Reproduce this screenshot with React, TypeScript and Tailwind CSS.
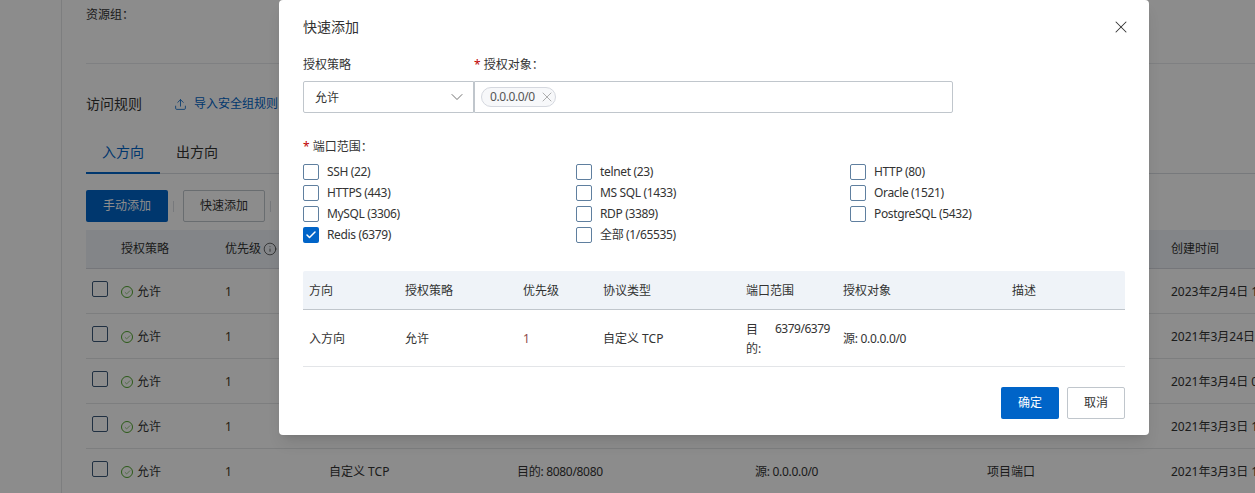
import { Check, ChevronDown, Info, Upload, X } from 'lucide-react';

const FONT = "font-['Noto_Sans','Noto_Sans_CJK_SC',sans-serif]";

const bgRows = [
  { port: '', target: '', desc: '', date: '2023年2月4日 16:20:11' },
  { port: '', target: '', desc: '', date: '2021年3月24日 10:11:02' },
  { port: '', target: '', desc: '', date: '2021年3月4日 09:30:45' },
  { port: '', target: '', desc: '', date: '2021年3月3日 17:22:36' },
  { port: '目的: 8080/8080', target: '源: 0.0.0.0/0', desc: '项目端口', date: '2021年3月3日 17:20:18' },
];

const ports = [
  { label: 'SSH (22)' },
  { label: 'telnet (23)' },
  { label: 'HTTP (80)' },
  { label: 'HTTPS (443)' },
  { label: 'MS SQL (1433)' },
  { label: 'Oracle (1521)' },
  { label: 'MySQL (3306)' },
  { label: 'RDP (3389)' },
  { label: 'PostgreSQL (5432)' },
  { label: 'Redis (6379)', checked: true },
  { label: '全部 (1/65535)' },
];

const bgCols = 'grid grid-cols-[35px_104px_104px_188px_238px_232px_184px_84px]';
const modalCols = 'grid grid-cols-[96px_118px_80px_143px_97px_169px_1fr]';

function Background() {
  return (
    <div className="flex h-[493px] overflow-hidden bg-white">
      <div className="w-[62px] shrink-0 border-r border-[#e3e5e8]" />
      <div className="min-w-0 flex-1 pl-6">
        <div className="h-[64px] border-b border-[#e8eaed] pt-[6px] text-xs leading-[18px] text-[#333]">资源组：</div>

        <div className="mt-[31px] flex h-[18px] items-center text-sm text-[#333]">
          <span>访问规则</span>
          <span className="ml-[32px] flex items-center text-xs text-[#0064c8]">
            <Upload size={13} strokeWidth={1.5} />
            <span className="ml-[7px] whitespace-nowrap">导入安全组规则</span>
          </span>
        </div>

        <div className="mt-5 flex h-[41px] border-b border-[#d9dce2] text-sm">
          <div className="-mb-px flex w-[74px] justify-center border-b-2 border-[#0064c8] pt-[9px] text-[#0064c8]">入方向</div>
          <div className="flex w-[74px] justify-center pt-[9px] text-[#333]">出方向</div>
        </div>

        <div className="mt-[16px] flex h-[32px] items-center text-xs">
          <div className="flex h-8 w-[82px] items-center justify-center rounded-[2px] bg-[#0064c8] text-white">手动添加</div>
          <div className="mr-[9px] ml-[5px] h-[11px] w-px bg-[#d9dce2]" />
          <div className="flex h-8 w-[82px] items-center justify-center rounded-[2px] border border-[#c0c6cc] text-[#333]">快速添加</div>
          <div className="ml-[5px] h-[11px] w-px bg-[#d9dce2]" />
        </div>

        <div className={`${bgCols} mt-2 h-[39px] w-[1169px] items-center border-b border-[#d5d8df] bg-[#eff3f8] text-xs text-[#333]`}>
          <span />
          <span>授权策略</span>
          <span className="flex items-center gap-[2px]">优先级<Info size={14} strokeWidth={1.25} /></span>
          <span />
          <span />
          <span />
          <span />
          <span className="whitespace-nowrap">创建时间</span>
        </div>

        {bgRows.map((row) => (
          <div key={row.date} className={`${bgCols} h-[45px] w-[1169px] items-center border-b border-[#e3e5e8] text-xs text-[#333]`}>
            <span className="ml-[6px] size-4 -translate-y-[2px] rounded-[2px] border border-[#3b5878]" />
            <span className="flex translate-y-[1px] items-center gap-1">
              <span className="flex size-3 items-center justify-center rounded-full border border-[#4fa52b] text-[#4fa52b]">
                <Check size={7} strokeWidth={2} />
              </span>
              允许
            </span>
            <span className="translate-y-[1px] text-[#4a3a20]">1</span>
            <span className="translate-y-[1px]">{row.port ? '自定义 TCP' : ''}</span>
            <span className="translate-y-[1px] tracking-[-0.3px]">{row.port}</span>
            <span className="translate-y-[1px] tracking-[-0.3px]">{row.target}</span>
            <span className="translate-y-[1px]">{row.desc}</span>
            <span className="translate-y-[1px] whitespace-nowrap">{row.date}</span>
          </div>
        ))}
      </div>
    </div>
  );
}

function PortCheckbox({ label, checked }: { label: string; checked?: boolean }) {
  return (
    <label className="flex h-[21px] items-center gap-2 text-xs tracking-[-0.35px] text-[#333]">
      {checked ? (
        <span className="flex size-4 items-center justify-center rounded-[2px] bg-[#0064c8] text-white">
          <Check size={12} strokeWidth={3} />
        </span>
      ) : (
        <span className="size-4 rounded-[2px] border border-[#5f7f9f]" />
      )}
      {label}
    </label>
  );
}

function QuickAddModal() {
  return (
    <div className="absolute top-0 left-[279px] h-[435px] w-[870px] rounded-sm bg-white px-6 shadow-lg">
      <div className="flex h-[54px] items-center justify-between text-sm text-[#333]">
        <span>快速添加</span>
        <X size={20} strokeWidth={1.25} className="-mr-[6px]" />
      </div>

      <div className="mt-[2px] flex text-xs text-[#333]">
        <div className="w-[171px]">
          <div className="h-[25px] pt-px leading-[16px]">授权策略</div>
          <div className="flex h-8 items-center justify-between rounded-l-[2px] border border-[#c0c6cc] pr-[6px] pl-[11px]">
            <span className="translate-y-px">允许</span>
            <ChevronDown size={20} strokeWidth={1} className="text-[#555]" />
          </div>
        </div>
        <div className="w-[479px]">
          <div className="h-[25px] pt-px leading-[16px]">
            <span className="text-[#c00000]">*</span>
            <span className="ml-[3px]">授权对象：</span>
          </div>
          <div className="flex h-8 items-center rounded-r-[2px] border border-[#c0c6cc] px-[6px]">
            <span className="flex h-5 items-center gap-1 rounded-full border border-[#d5d8df] bg-[#f7f8fa] pl-2 tracking-[-0.4px] text-[#555]">
              0.0.0.0/0
              <X size={16} strokeWidth={1} className="text-[#888]" />
            </span>
          </div>
        </div>
      </div>

      <div className="mt-[25px] h-[23px] pt-px text-xs leading-[16px] text-[#333]">
        <span className="text-[#c00000]">*</span>
        <span className="ml-[3px]">端口范围：</span>
      </div>
      <div className="grid grid-cols-[273px_274px_1fr]">
        {ports.map((port) => (
          <PortCheckbox key={port.label} label={port.label} checked={port.checked} />
        ))}
      </div>

      <div className="mt-[26px] text-xs text-[#333]">
        <div className={`${modalCols} h-[39px] items-center rounded-t-[2px] border-b border-[#c0c6cc] bg-[#eff3f8] pt-px pl-[6px]`}>
          <span>方向</span>
          <span>授权策略</span>
          <span>优先级</span>
          <span>协议类型</span>
          <span>端口范围</span>
          <span>授权对象</span>
          <span>描述</span>
        </div>
        <div className={`${modalCols} h-[57px] items-center border-b border-[#e3e5e8] pt-px pl-[6px]`}>
          <span>入方向</span>
          <span>允许</span>
          <span className="text-[#8f4a4a]">1</span>
          <span>自定义 TCP</span>
          <span className="flex gap-[14px] leading-[19px]">
            <span className="w-[15px]">目的:</span>
            <span className="-mt-[1px] tracking-[-0.5px]">6379/6379</span>
          </span>
          <span className="tracking-[-0.3px]">源: 0.0.0.0/0</span>
          <span />
        </div>
      </div>

      <div className="mt-5 flex justify-end gap-2 text-xs">
        <button className="h-8 w-[58px] rounded-[2px] bg-[#0064c8] text-white">确定</button>
        <button className="h-8 w-[58px] rounded-[2px] border border-[#c0c6cc] text-[#333]">取消</button>
      </div>
    </div>
  );
}

export default function App() {
  return (
    <div className={`relative h-[493px] w-[1255px] overflow-hidden ${FONT}`}>
      <Background />
      <div className="absolute inset-0 bg-black/45" />
      <QuickAddModal />
    </div>
  );
}
